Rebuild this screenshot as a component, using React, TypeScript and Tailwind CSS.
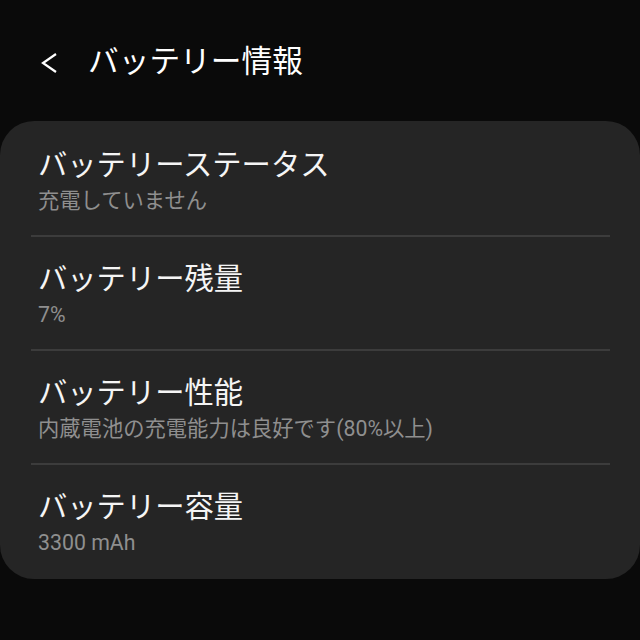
const items = [
  { title: 'バッテリーステータス', sub: '充電していません' },
  { title: 'バッテリー残量', sub: '7%' },
  { title: 'バッテリー性能', sub: '内蔵電池の充電能力は良好です(80%以上)' },
  { title: 'バッテリー容量', sub: '3300 mAh' },
]

export default function App() {
  return (
    <div
      className="w-[640px] h-[640px] bg-[#0a0a0a] overflow-hidden"
      style={{ fontFamily: 'Roboto, "Noto Sans CJK JP", sans-serif' }}
    >
      {/* header */}
      <div className="h-[121px] flex items-start pt-[42px]">
        <svg width="18" height="22" viewBox="0 0 18 22" className="ml-[40px] mt-[11px]">
          <path d="M16 1 L3 10 L16 19" fill="none" stroke="#fff" strokeWidth="2.2" />
        </svg>
        <span className="ml-[30px] text-[30.7px] leading-[40px] text-white">バッテリー情報</span>
      </div>

      {/* card */}
      <div className="w-[640px] h-[458px] bg-[#252525] rounded-[34px] pt-[2px]">
        {items.map((item, i) => (
          <div key={i}>
            {i > 0 && <div className="ml-[31px] mr-[30px] h-[2px] bg-[#3c3c3c]" />}
            <div className="pl-[38px] pt-[24px] pb-[20px]">
              <div className="text-[29.3px] leading-[36px] text-[#f5f5f5]">{item.title}</div>
              <div className="mt-[4px] text-[21.3px] leading-[28px] text-[#8f8f8f]">{item.sub}</div>
            </div>
          </div>
        ))}
      </div>
    </div>
  )
}
